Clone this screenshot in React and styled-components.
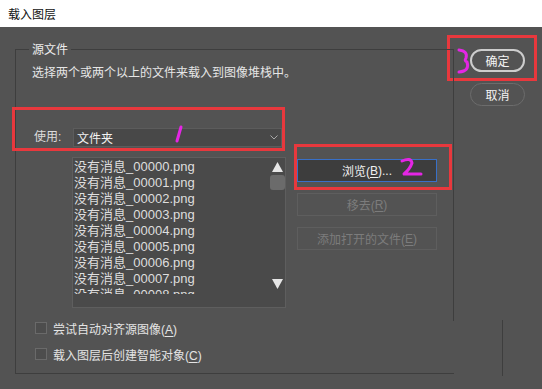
import React from "react";
import styled, { createGlobalStyle } from "styled-components";

const Global = createGlobalStyle`
  html, body { margin: 0; padding: 0; background: #535353; }
  body { font-family: "Liberation Sans", "Noto Sans CJK SC", sans-serif; }
`;

const FONT = `"Liberation Sans", "Noto Sans CJK SC", sans-serif`;
const RED = "#e8383d";

const Window = styled.div`
  position: relative;
  width: 542px;
  height: 389px;
  overflow: hidden;
  background: #535353;
  display: flex;
  flex-direction: column;
  font-family: ${FONT};
  font-size: 12px;
  color: #e8e8e8;
`;

const TitleBar = styled.div`
  flex: none;
  height: 27px;
  background: #ffffff;
  color: #111;
  display: flex;
  align-items: center;
  padding-left: 8px;
  font-size: 12px;
`;

const Body = styled.div`
  display: flex;
  align-items: flex-start;
  padding: 22px 0 0 15px;
`;

const Group = styled.div`
  position: relative;
  box-sizing: border-box;
  width: 439px;
  border: 1px solid #3e3e3e;
  border-right: none;
  padding: 0 0 10px 16px;
  display: flex;
  flex-direction: column;
  align-items: flex-start;
  &::after {
    content: "";
    position: absolute;
    right: 0;
    top: -1px;
    width: 1px;
    height: 272px;
    background: #3e3e3e;
  }
  &::before {
    content: "";
    position: absolute;
    left: 486px;
    top: 270px;
    width: 1px;
    height: 56px;
    background: #3e3e3e;
  }
`;

const Legend = styled.span`
  position: absolute;
  top: -8px;
  left: 13px;
  padding: 0 3px;
  line-height: 16px;
  background: #535353;
  color: #ececec;
`;

const Description = styled.div`
  margin-top: 15px;
  line-height: 16px;
  color: #e6e6e6;
`;

const UseHighlight = styled.div`
  box-sizing: border-box;
  width: 273px;
  height: 44px;
  margin: 26px 0 0 -20px;
  border: 3px solid ${RED};
  padding: 17px 0 0 19px;
  display: flex;
  align-items: center;
`;

const Label = styled.span`
  flex: 0 0 39px;
  line-height: 19px;
  color: #dcdcdc;
`;

const Select = styled.div`
  box-sizing: border-box;
  width: 209px;
  height: 19px;
  background: #484848;
  border: 1px solid #5c5c5c;
  display: flex;
  align-items: center;
  justify-content: space-between;
  padding: 0 3px 0 3px;
  color: #f2f2f2;
  font-size: 12px;
`;

const ListRow = styled.div`
  margin: 6px 0 0 40px;
  display: flex;
  align-items: flex-start;
  gap: 11px;
`;

const ListBox = styled.div`
  box-sizing: border-box;
  width: 214px;
  height: 151px;
  background: #4a4a4a;
  border: 1px solid #5e5e5e;
  display: flex;
  align-items: flex-start;
`;

const Items = styled.div`
  box-sizing: border-box;
  width: 195px;
  height: 136px;
  overflow: hidden;
  padding: 1px 0 0 1px;
`;

const Item = styled.div`
  font-size: 13px;
  line-height: 16px;
  white-space: nowrap;
  color: #dedede;
`;

const Scroll = styled.div`
  box-sizing: border-box;
  width: 16px;
  height: 135px;
  margin-left: 1px;
  padding: 4px 0 4px;
  display: flex;
  flex-direction: column;
  align-items: center;
`;

const Thumb = styled.div`
  width: 15px;
  height: 15px;
  margin-top: 3px;
  border-radius: 3px;
  background: #6b6b6b;
`;

const DownArrow = styled.svg`
  margin-top: auto;
`;

const ButtonColumn = styled.div`
  padding-top: 2px;
  display: flex;
  flex-direction: column;
  align-items: flex-start;
  gap: 11px;
`;

const Highlight = styled.div`
  border: 3px solid ${RED};
  padding: ${(p) => p.$pad};
  margin: ${(p) => p.$margin};
`;

const Button = styled.div`
  box-sizing: border-box;
  width: 140px;
  height: 23px;
  display: flex;
  align-items: center;
  justify-content: center;
  font-size: 12px;
  border: 1px solid ${(p) => (p.$focused ? "#3870c8" : "#5e5e5e")};
  background: ${(p) => (p.$focused ? "#3d3d3d" : "#535353")};
  color: ${(p) => (p.$disabled ? "#7c7c7c" : "#f0f0f0")};
`;

const Mn = styled.span`
  text-decoration: underline;
  text-underline-offset: 2px;
`;

const CheckRow = styled.label`
  margin: ${(p) => p.$mt} 0 0 3px;
  height: 18px;
  display: flex;
  align-items: center;
  gap: 6px;
  color: #e4e4e4;
`;

const Box = styled.span`
  box-sizing: border-box;
  width: 12px;
  height: 12px;
  border: 1px solid #6a6a6a;
  background: #4d4d4d;
`;

const Side = styled.div`
  margin-left: 16px;
  display: flex;
  flex-direction: column;
  align-items: flex-start;
  gap: 11px;
`;

const Pill = styled.div`
  box-sizing: border-box;
  width: 55px;
  height: 23px;
  border-radius: 12px;
  display: flex;
  align-items: center;
  justify-content: center;
  font-size: 12px;
  color: #f4f4f4;
  border: ${(p) => (p.$primary ? "2px solid #cdcdcd" : "1px solid #6c6c6c")};
`;

const Marks = styled.svg`
  position: absolute;
  left: 0;
  top: 0;
  pointer-events: none;
`;

const files = [0, 1, 2, 3, 4, 5, 6, 7, 8].map(
  (n) => `没有消息_0000${n}.png`
);

export default function App() {
  return (
    <>
      <Global />
      <Window>
        <TitleBar>载入图层</TitleBar>
        <Body>
          <Group>
            <Legend>源文件</Legend>
            <Description>选择两个或两个以上的文件来载入到图像堆栈中。</Description>
            <UseHighlight>
              <Label>使用:</Label>
              <Select>
                <span>文件夹</span>
                <svg width="8" height="5" viewBox="0 0 8 5">
                  <path d="M0.5 0.5 L4 4 L7.5 0.5" fill="none" stroke="#a8a8a8" strokeWidth="1" />
                </svg>
              </Select>
            </UseHighlight>
            <ListRow>
              <ListBox>
                <Items>
                  {files.map((f) => (
                    <Item key={f}>{f}</Item>
                  ))}
                </Items>
                <Scroll>
                  <svg width="11" height="10" viewBox="0 0 11 10">
                    <path d="M5.5 0 L11 10 L0 10 Z" fill="#e6e6e6" />
                  </svg>
                  <Thumb />
                  <DownArrow width="11" height="10" viewBox="0 0 11 10">
                    <path d="M0 0 L11 0 L5.5 10 Z" fill="#e6e6e6" />
                  </DownArrow>
                </Scroll>
              </ListBox>
              <ButtonColumn>
                <Highlight $pad="12px 12px 5px 0" $margin="-15px -15px -8px -3px">
                  <Button $focused>
                    浏览(<Mn>B</Mn>)...
                  </Button>
                </Highlight>
                <Button $disabled>
                  移去(<Mn>R</Mn>)
                </Button>
                <Button $disabled>
                  添加打开的文件(<Mn>E</Mn>)
                </Button>
              </ButtonColumn>
            </ListRow>
            <CheckRow $mt="11px">
              <Box />
              <span>
                尝试自动对齐源图像(<Mn>A</Mn>)
              </span>
            </CheckRow>
            <CheckRow $mt="8px">
              <Box />
              <span>
                载入图层后创建智能对象(<Mn>C</Mn>)
              </span>
            </CheckRow>
          </Group>
          <Side>
            <Highlight $pad="11px 9px 6px 20px" $margin="-14px -12px -9px -23px">
              <Pill $primary>确定</Pill>
            </Highlight>
            <Pill>取消</Pill>
          </Side>
        </Body>
        <Marks width="542" height="389" viewBox="0 0 542 389">
          <g fill="none" stroke="#e426e4" strokeWidth="3" strokeLinecap="round" strokeLinejoin="round">
            <path d="M181 127 L177 141" />
            <path d="M402 161 Q411 157 412 163 Q410 169 404 174 L421 174" />
            <path d="M459 50 Q468 51 466 58 Q464 61 467 62 Q470 71 459 72" />
          </g>
        </Marks>
      </Window>
    </>
  );
}
